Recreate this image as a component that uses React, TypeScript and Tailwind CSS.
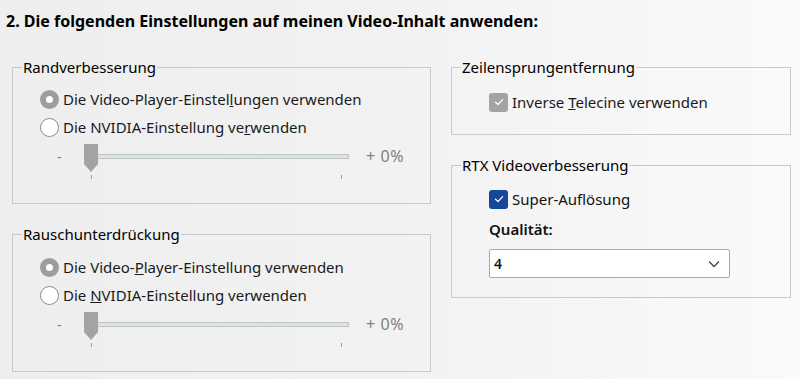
import type { ReactNode } from "react";

function Radio({ checked }: { checked?: boolean }) {
  if (checked) {
    return (
      <span className="flex h-[19px] w-[19px] shrink-0 items-center justify-center rounded-full bg-[#9d9d9d]">
        <span className="h-[7px] w-[7px] rounded-full bg-white" />
      </span>
    );
  }
  return <span className="h-[19px] w-[19px] shrink-0 rounded-full border border-[#8c8c8c] bg-white" />;
}

function Check({ color }: { color: string }) {
  return (
    <span className={`flex h-[19px] w-[19px] shrink-0 items-center justify-center rounded-[3px] ${color}`}>
      <svg width="12" height="12" viewBox="0 0 12 12" fill="none">
        <path d="M2.5 6.3 L5 8.6 L9.6 3.6" stroke="white" strokeWidth="1.3" strokeLinecap="round" strokeLinejoin="round" />
      </svg>
    </span>
  );
}

function Box({ title, className, children }: { title: string; className: string; children: ReactNode }) {
  return (
    <fieldset className={`border border-[#c9c9c9] ${className}`}>
      <legend className="ml-[9px] px-px text-[15px] leading-[19px] text-black">{title}</legend>
      {children}
    </fieldset>
  );
}

function Slider() {
  return (
    <div className="mt-[3px] flex items-start text-[#808080]">
      <span className="ml-[44px] w-[26px] pt-[3px] text-[14px] leading-[20px]">-</span>
      <div className="relative h-[36px] w-[266px]">
        <div className="absolute left-[3px] right-0 top-[10px] h-[5px] border border-[#bfc4c4] bg-[#dde2e2]" />
        <svg className="absolute left-0 top-0" width="16" height="29" viewBox="0 0 16 29">
          <path d="M1 0 H15 V20 L8 28 L1 20 Z" fill="#a3a3a3" />
        </svg>
        <div className="absolute left-[8px] top-[31px] h-[4px] w-px bg-[#9a9a9a]" />
        <div className="absolute left-[258px] top-[31px] h-[4px] w-px bg-[#9a9a9a]" />
      </div>
      <span className="ml-[17px] pt-[1px] text-[16px] leading-[22px] tracking-[0.6px]">+ 0%</span>
    </div>
  );
}

function RadioRow({ checked, children }: { checked?: boolean; children: ReactNode }) {
  return (
    <div className="flex h-[28px] items-center gap-[4px] pl-[27px]">
      <Radio checked={checked} />
      <span className="text-[15px] leading-[20px] text-[#1a1a1a]">{children}</span>
    </div>
  );
}

export default function App() {
  return (
    <div
      className="h-[379px] w-[800px] overflow-hidden bg-linear-to-r from-[#eeeeee] via-[#f2f2f2] to-[#fafafa]"
      style={{ fontFamily: '"Noto Sans", "DejaVu Sans", sans-serif' }}
    >
      <h1 className="pl-[6px] pt-[10px] text-[16px] font-bold leading-[22px] text-black">
        2. Die folgenden Einstellungen auf meinen Video-Inhalt anwenden:
      </h1>

      <div className="mt-[26px] flex gap-[20px] pl-[12px]">
        <div className="flex w-[419px] flex-col gap-[21px]">
          <Box title="Randverbesserung" className="h-[146px]">
            <div className="pt-[8px]">
              <RadioRow checked>
                Die Video-Player-Einstel<u>l</u>ungen verwenden
              </RadioRow>
              <RadioRow>
                Die NVIDIA-Einstellung ve<u>r</u>wenden
              </RadioRow>
              <Slider />
            </div>
          </Box>
          <Box title="Rauschunterdrückung" className="h-[147px]">
            <div className="pt-[9px]">
              <RadioRow checked>
                Die Video-<u>P</u>layer-Einstellung verwenden
              </RadioRow>
              <RadioRow>
                Die <u>N</u>VIDIA-Einstellung verwenden
              </RadioRow>
              <Slider />
            </div>
          </Box>
        </div>

        <div className="flex w-[340px] flex-col gap-[21px]">
          <Box title="Zeilensprungentfernung" className="h-[77px]">
            <div className="flex items-center gap-[4px] pl-[37px] pt-[15px]">
              <Check color="bg-[#a3a3a3]" />
              <span className="text-[15px] leading-[20px] text-[#1a1a1a]">
                Inverse <u>T</u>elecine verwenden
              </span>
            </div>
          </Box>
          <Box title="RTX Videoverbesserung" className="h-[142px]">
            <div className="pl-[37px] pt-[14px]">
              <div className="flex items-center gap-[4px]">
                <Check color="bg-[#17479a]" />
                <span className="text-[15px] leading-[20px] text-[#111]">Super-Auflösung</span>
              </div>
              <div className="mt-[10px] text-[15px] font-semibold leading-[20px] text-[#111]">Qualität:</div>
              <div className="mt-[10px] flex h-[29px] w-[241px] items-center justify-between rounded-[2px] border border-[#a9a9a9] bg-white pl-[4px] pr-[9px]">
                <span className="text-[14px] font-semibold text-[#111]">4</span>
                <svg width="12" height="8" viewBox="0 0 12 8" fill="none">
                  <path d="M1 1.5 L6 6.5 L11 1.5" stroke="#444" strokeWidth="1.3" />
                </svg>
              </div>
            </div>
          </Box>
        </div>
      </div>
    </div>
  );
}
